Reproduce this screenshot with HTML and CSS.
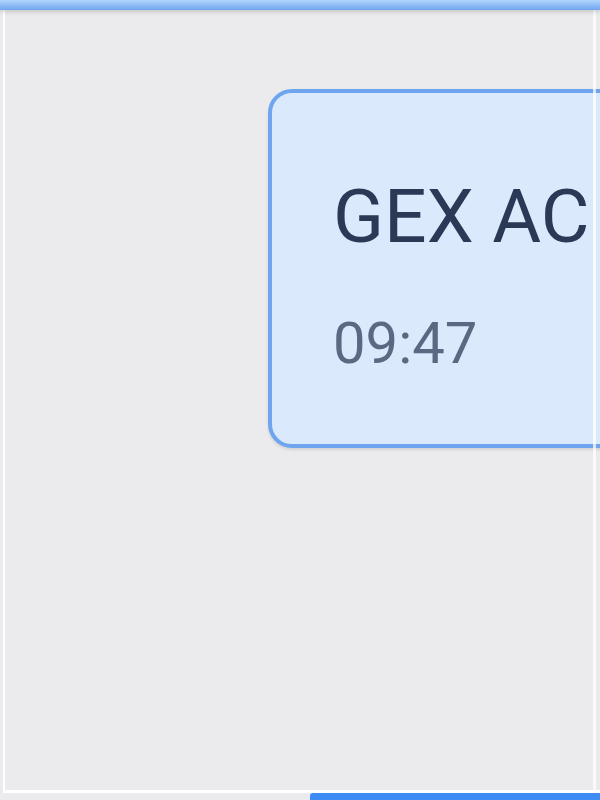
FILE: index.html
```html
<!DOCTYPE html>
<html lang="en">
<head>
    <meta charset="UTF-8">
    <meta name="viewport" content="width=device-width, initial-scale=1.0">
    <title>Chat</title>
    <link rel="stylesheet" href="styles.css">
</head>
<body>
    <div class="topbar"></div>
    <div class="frame">
        <div class="chat">
            <div class="bubble">
                <div class="msg">GEX AC</div>
                <div class="time">09:47</div>
            </div>
        </div>
    </div>
    <div class="footer">
        <div class="send-bar"></div>
    </div>
</body>
</html>
```

FILE: styles.css
```css
html, body {
    margin: 0;
    height: 100%;
    overflow: hidden;
}
body {
    font-family: Roboto, "Noto Sans", sans-serif;
    background-color: #ebebed;
    display: flex;
    flex-direction: column;
}
.topbar {
    height: 10px;
    background: linear-gradient(#b0d5fd, #72a4ee);
    box-shadow: 0 2px 4px rgba(0, 0, 0, 0.15);
    position: relative;
    z-index: 2;
}
.frame {
    flex: 1;
    position: relative;
    margin-left: 3px;
    border-left: 2px solid #fff;
    border-bottom: 3px solid #fff;
}
.frame::after {
    content: "";
    position: absolute;
    top: 0;
    bottom: 0;
    left: 588px;
    width: 3px;
    background: rgba(255, 255, 255, 0.75);
}
.chat {
    padding-top: 79px;
    padding-left: 263px;
}
.bubble {
    width: 420px;
    height: 359px;
    box-sizing: border-box;
    background-color: #dbe9fc;
    border: 4px solid #6fa5ee;
    border-radius: 24px;
    box-shadow: 0 2px 3px rgba(0, 0, 0, 0.1);
    padding: 86px 0 0 61px;
}
.msg {
    font-size: 75px;
    line-height: 1;
    color: #2a3956;
    white-space: nowrap;
}
.time {
    margin-top: 60px;
    font-size: 58px;
    line-height: 1;
    color: #5a6881;
}
.footer {
    height: 7px;
    display: flex;
    justify-content: flex-end;
}
.send-bar {
    width: 290px;
    background-color: #3d8cf5;
    border-radius: 3px 0 0 0;
}
```
